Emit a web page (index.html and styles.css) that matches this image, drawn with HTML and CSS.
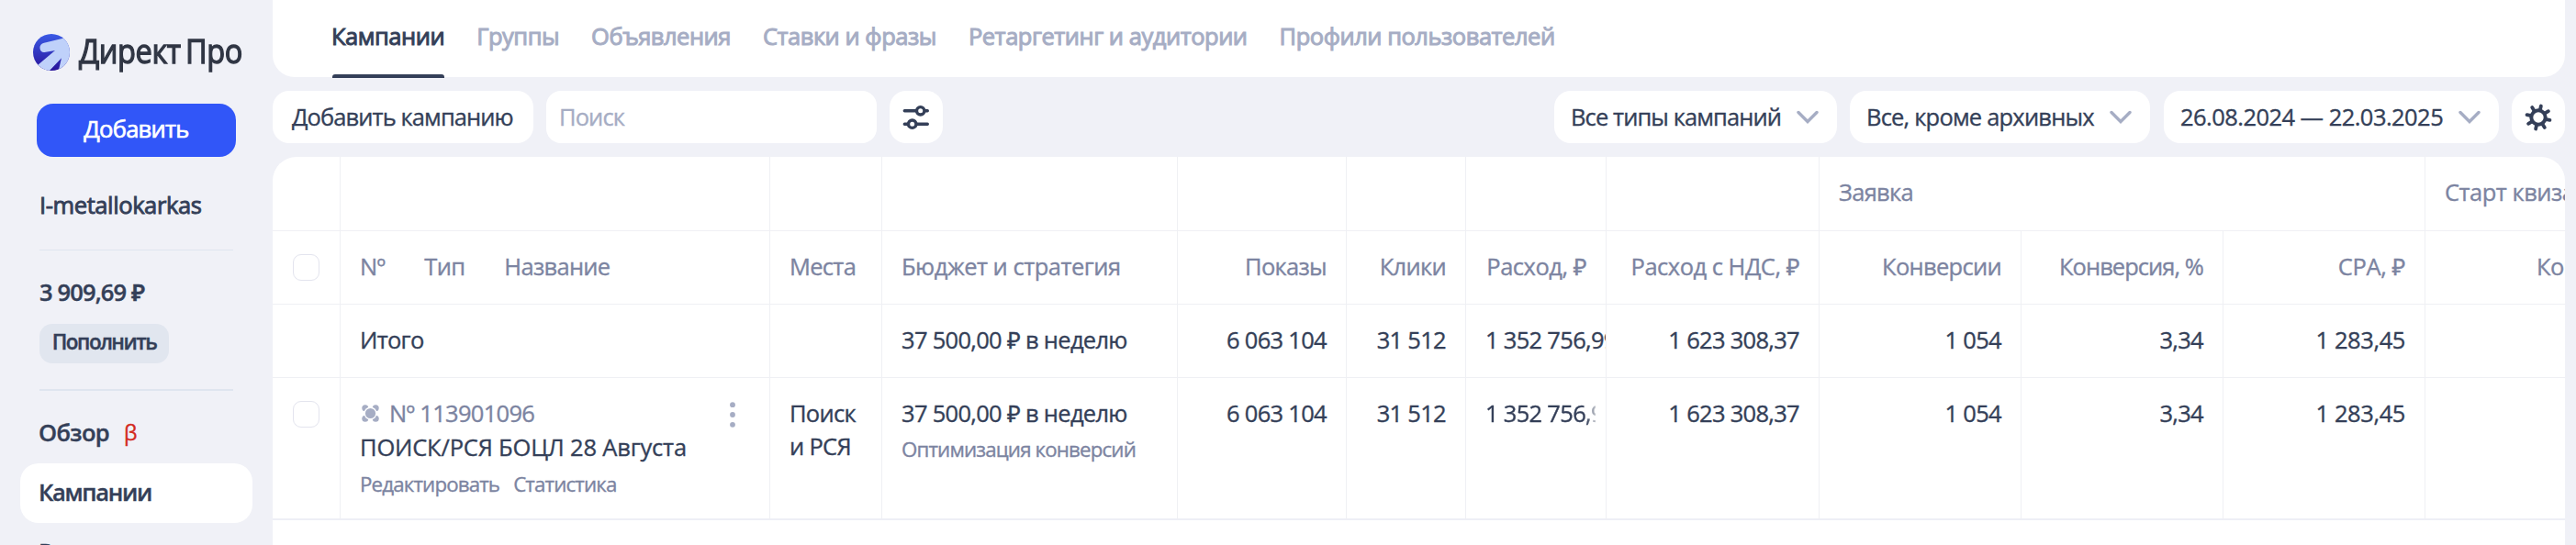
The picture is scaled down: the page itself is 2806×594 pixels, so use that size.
FILE: index.html
```html
<!DOCTYPE html>
<html lang="ru">

<head>
    <meta charset="UTF-8">
    <meta name="viewport" content="width=device-width, initial-scale=1.0">
    <title>Директ Про</title>
    <link rel="stylesheet" href="styles.css">
</head>

<body>
    <div class="layout">
        <aside class="sidebar">
            <div class="logo">
                <svg width="40" height="40" viewBox="0 0 40 40">
                    <defs>
                        <linearGradient id="logoFill" x1="0" y1="0" x2="0" y2="1">
                            <stop offset="0" stop-color="#3a5ae6" />
                            <stop offset="1" stop-color="#29139a" />
                        </linearGradient>
                        <clipPath id="logoClip">
                            <circle cx="20" cy="20" r="20" />
                        </clipPath>
                    </defs>
                    <circle cx="20" cy="20" r="20" fill="url(#logoFill)" />
                    <path clip-path="url(#logoClip)" fill="#bfd1fa" d="M31.7 5 L12 9.8 C8.5 10.8 7.2 13 7.5 15.5 C7.8 18.5 9.5 20.3 12.5 20 L24 18 L5 34 L16 42 L31 26.3 L27.5 41 L42 41 L42 5 Z" />
                </svg>
                <span class="logo-text">Директ Про</span>
            </div>
            <button type="button" class="add-btn">Добавить</button>
            <div class="account">I-metallokarkas</div>
            <div class="divider"></div>
            <div class="balance">3 909,69 ₽</div>
            <button type="button" class="topup">Пополнить</button>
            <div class="divider thick"></div>
            <nav class="menu">
                <a class="menu-item">Обзор <span class="beta">β</span></a>
                <a class="menu-item active">Кампании</a>
                <a class="menu-item">Рекомендации</a>
            </nav>
        </aside>

        <main class="content">
            <nav class="tabs">
                <a class="tab active">Кампании</a>
                <a class="tab">Группы</a>
                <a class="tab">Объявления</a>
                <a class="tab">Ставки и фразы</a>
                <a class="tab">Ретаргетинг и аудитории</a>
                <a class="tab">Профили пользователей</a>
            </nav>

            <div class="toolbar">
                <button type="button" class="box add-campaign">Добавить кампанию</button>
                <div class="box search">Поиск</div>
                <button type="button" class="box icon-btn">
                    <svg width="30" height="28" viewBox="0 0 30 28" fill="none" stroke="#343f58" stroke-width="3.4" stroke-linecap="round">
                        <path d="M2.3 6.8H27.3M2.3 21.2H27.3" />
                        <circle cx="19.7" cy="6.8" r="4.2" fill="#fff" />
                        <circle cx="10.7" cy="21.2" r="4.2" fill="#fff" />
                    </svg>
                </button>
                <div class="spacer"></div>
                <div class="box select types">
                    <span>Все типы кампаний</span>
                    <svg class="chevron" width="24" height="16" viewBox="0 0 24 16"><path d="M2 2.5L12 12.5L22 2.5" /></svg>
                </div>
                <div class="box select status">
                    <span>Все, кроме архивных</span>
                    <svg class="chevron" width="24" height="16" viewBox="0 0 24 16"><path d="M2 2.5L12 12.5L22 2.5" /></svg>
                </div>
                <div class="box select period">
                    <span>26.08.2024 — 22.03.2025</span>
                    <svg class="chevron" width="24" height="16" viewBox="0 0 24 16"><path d="M2 2.5L12 12.5L22 2.5" /></svg>
                </div>
                <button type="button" class="box icon-btn">
                    <svg width="30" height="30" viewBox="-15 -15 30 30" stroke="#343f58" fill="none">
                        <circle r="7.7" stroke-width="4" />
                        <path transform="rotate(13)" stroke-width="3.8" stroke-linecap="round" d="M0 -9V-12.8M0 9V12.8M-9 0H-12.8M9 0H12.8M6.4 -6.4L9.1 -9.1M6.4 6.4L9.1 9.1M-6.4 6.4L-9.1 9.1M-6.4 -6.4L-9.1 -9.1" />
                    </svg>
                </button>
            </div>

            <div class="panel">
                <table>
                    <colgroup>
                        <col class="c-check">
                        <col class="c-name">
                        <col class="c-place">
                        <col class="c-budget">
                        <col class="c-shows">
                        <col class="c-clicks">
                        <col class="c-cost">
                        <col class="c-vat">
                        <col class="c-goal">
                        <col class="c-goal">
                        <col class="c-goal">
                        <col class="c-last">
                    </colgroup>
                    <thead>
                        <tr class="groups">
                            <th></th>
                            <th></th>
                            <th></th>
                            <th></th>
                            <th></th>
                            <th></th>
                            <th></th>
                            <th></th>
                            <th colspan="3">Заявка</th>
                            <th class="wide">Старт квиза</th>
                        </tr>
                        <tr>
                            <th class="check"><span class="checkbox"></span></th>
                            <th>
                                <div class="name-head"><span>Nº</span><span>Тип</span><span>Название</span></div>
                            </th>
                            <th>Места</th>
                            <th class="wide">Бюджет и стратегия</th>
                            <th class="num">Показы</th>
                            <th class="num">Клики</th>
                            <th class="num wide">Расход, ₽</th>
                            <th class="num wide">Расход с НДС, ₽</th>
                            <th class="num">Конверсии</th>
                            <th class="num tight">Конверсия, %</th>
                            <th class="num cpa">CPA, ₽</th>
                            <th class="num">Конверсии</th>
                        </tr>
                    </thead>
                    <tbody>
                        <tr>
                            <td></td>
                            <td>Итого</td>
                            <td></td>
                            <td>37 500,00 ₽ в неделю</td>
                            <td class="num">6 063 104</td>
                            <td class="num">31 512</td>
                            <td class="cut">1 352 756,99</td>
                            <td class="num">1 623 308,37</td>
                            <td class="num">1 054</td>
                            <td class="num">3,34</td>
                            <td class="num cpa">1 283,45</td>
                            <td></td>
                        </tr>
                        <tr class="campaign">
                            <td class="check"><span class="checkbox"></span></td>
                            <td>
                                <div class="camp-top">
                                    <svg width="19" height="19" viewBox="0 0 19 19" fill="#a6adc4">
                                        <circle cx="3.8" cy="3.8" r="3.5" />
                                        <circle cx="15.2" cy="3.8" r="3.5" />
                                        <circle cx="3.8" cy="15.2" r="3.5" />
                                        <circle cx="15.2" cy="15.2" r="3.5" />
                                        <circle cx="9.5" cy="9.5" r="7" fill="#fff" />
                                        <circle cx="9.5" cy="9.5" r="5.6" />
                                    </svg>
                                    <span class="camp-id">Nº 113901096</span>
                                    <svg class="dots" width="6" height="28" viewBox="0 0 6 28" fill="#a6adc4">
                                        <circle cx="3" cy="3.2" r="2.9" />
                                        <circle cx="3" cy="14" r="2.9" />
                                        <circle cx="3" cy="24.8" r="2.9" />
                                    </svg>
                                </div>
                                <div class="camp-name">ПОИСК/РСЯ БОЦЛ 28 Августа</div>
                                <div class="links"><a>Редактировать</a><a>Статистика</a></div>
                            </td>
                            <td>Поиск<br>и РСЯ</td>
                            <td>37 500,00 ₽ в неделю<div class="strategy">Оптимизация конверсий</div></td>
                            <td class="num">6 063 104</td>
                            <td class="num">31 512</td>
                            <td class="cut"><div class="fade">1 352 756,99</div></td>
                            <td class="num">1 623 308,37</td>
                            <td class="num">1 054</td>
                            <td class="num">3,34</td>
                            <td class="num cpa">1 283,45</td>
                            <td></td>
                        </tr>
                    </tbody>
                </table>
            </div>
        </main>
    </div>
</body>

</html>
```
FILE: styles.css
```css
* {
    margin: 0;
    padding: 0;
    box-sizing: border-box;
}

body {
    height: 594px;
    overflow: hidden;
    background: #f0f1f7;
    color: #343f58;
    font-family: "Open Sans", "Noto Sans", sans-serif;
    font-size: 25.5px;
    line-height: 36px;
    letter-spacing: -0.7px;
    -webkit-text-stroke: 0.35px;
}

button {
    border: none;
    color: inherit;
    font: inherit;
    letter-spacing: inherit;
}

.layout {
    display: flex;
    height: 594px;
}

/* sidebar */
.sidebar {
    width: 297px;
    flex-shrink: 0;
    overflow: hidden;
}

.logo {
    display: flex;
    height: 113px;
    padding: 37px 0 0 36px;
    gap: 10px;
}

.logo-text {
    margin-top: -4px;
    color: #303644;
    font-size: 37px;
    line-height: 44px;
    letter-spacing: -0.5px;
    word-spacing: -3px;
    white-space: nowrap;
    transform: scaleX(0.88);
    transform-origin: left;
    -webkit-text-stroke: 1.3px;
}

.add-btn {
    display: block;
    width: 217px;
    height: 58px;
    margin-left: 40px;
    padding-bottom: 4px;
    border-radius: 18px;
    background: #3156f8;
    color: #fff;
    -webkit-text-stroke: 0.7px;
}

.account {
    margin: 34px 0 0 43px;
    letter-spacing: -0.4px;
    -webkit-text-stroke: 0.9px;
}

.divider {
    width: 211px;
    height: 1px;
    margin: 31px 0 0 43px;
    background: #dfe5ef;
}

.divider.thick {
    height: 2px;
    margin-top: 28px;
}

.balance {
    margin: 27px 0 0 43px;
    font-weight: 600;
    letter-spacing: -0.85px;
    -webkit-text-stroke: 0.4px;
}

.topup {
    display: block;
    width: 141px;
    height: 43px;
    margin: 17px 0 0 43px;
    padding: 0 0 3px;
    border-radius: 14px;
    background: #e1e6ef;
    font-size: 22.5px;
    font-weight: 600;
    line-height: 30px;
    letter-spacing: -1.5px;
    -webkit-text-stroke: 0.4px;
}

.menu {
    margin: 14px 0 0 22px;
}

.menu-item {
    display: flex;
    align-items: center;
    width: 253px;
    height: 65px;
    padding: 0 0 3px 20px;
    border-radius: 20px;
    font-weight: 600;
    letter-spacing: -0.65px;
    -webkit-text-stroke: 0.4px;
}

.menu-item.active {
    background: #fff;
    letter-spacing: -1.3px;
}

.beta {
    margin-left: 16px;
    color: #d32a1e;
    font-size: 23px;
    font-weight: 400;
}

/* main area */
.content {
    width: 2497px;
    display: flex;
    flex-direction: column;
}

.tabs {
    display: flex;
    gap: 35px;
    height: 84px;
    flex-shrink: 0;
    padding: 21px 0 0 64px;
    border-radius: 0 0 24px 24px;
    background: #fff;
}

.tab {
    position: relative;
    color: #a6adc4;
    letter-spacing: -0.48px;
    -webkit-text-stroke: 1px;
}

.tab.active {
    color: #343f58;
}

.tab.active::after {
    content: "";
    position: absolute;
    left: 1px;
    right: 0;
    top: 60px;
    height: 4px;
    border-radius: 3px 3px 0 0;
    background: #343f58;
}

.toolbar {
    display: flex;
    gap: 14px;
    margin: 15px 0;
    letter-spacing: -0.9px;
}

.box {
    display: flex;
    align-items: center;
    height: 57px;
    border-radius: 18px;
    background: #fff;
    white-space: nowrap;
}

.add-campaign {
    width: 284px;
    padding: 0 0 2px 21px;
}

.search {
    width: 360px;
    padding: 0 0 2px 14px;
    border-radius: 16px;
    color: #a6adc4;
}

.icon-btn {
    width: 58px;
    justify-content: center;
}

.spacer {
    flex: 1;
}

.select {
    justify-content: space-between;
    padding: 0 20px 2px 18px;
}

.types {
    width: 308px;
}

.status {
    width: 327px;
    margin-right: 1px;
    letter-spacing: -0.8px;
}

.period {
    width: 365px;
    letter-spacing: -0.55px;
}

.chevron {
    margin-top: 3px;
    fill: none;
    stroke: #a6adc4;
    stroke-width: 3.4;
    stroke-linecap: round;
}

/* campaigns table */
.panel {
    flex: 1;
    overflow: hidden;
    border-radius: 26px 26px 0 0;
    background: #fff;
}

table {
    width: 2618px;
    table-layout: fixed;
    border-collapse: separate;
    border-spacing: 0;
}

.c-check { width: 74px; }
.c-name { width: 468px; }
.c-place { width: 122px; }
.c-budget { width: 322px; }
.c-shows { width: 184px; }
.c-clicks { width: 130px; }
.c-cost { width: 153px; }
.c-vat { width: 232px; }
.c-goal { width: 220px; }
.c-last { width: 273px; }

th,
td {
    height: 80px;
    padding: 20px 21px 0 21px;
    border-right: 1px solid #eff0f4;
    border-bottom: 1px solid #eff0f4;
    font-weight: 400;
    text-align: left;
    vertical-align: top;
    white-space: nowrap;
}

th {
    color: #7c84a1;
}

.groups th {
    height: 81px;
}

.num {
    text-align: right;
}

th.wide {
    letter-spacing: -0.5px;
}

th.tight {
    letter-spacing: -0.95px;
}

.cpa {
    letter-spacing: -0.4px;
}

.campaign td {
    height: 155px;
    border-bottom: 2px solid #eeeff6;
}

.check {
    padding: 25px 0 0 22px;
}

.checkbox {
    display: block;
    width: 29px;
    height: 29px;
    border: 1px solid #e3e4ee;
    border-radius: 9px;
}

.name-head {
    display: flex;
    gap: 43px;
}

.camp-top {
    display: flex;
    align-items: center;
    padding-left: 2px;
    color: #7c84a1;
}

.camp-id {
    margin-left: 11px;
}

.dots {
    margin: 4px 16px 0 auto;
}

.camp-name {
    margin-top: 1px;
    letter-spacing: -0.18px;
}

.links {
    display: flex;
    gap: 15px;
    margin-top: 8px;
}

.links,
.strategy {
    color: #7c84a1;
    font-size: 22.3px;
    line-height: 30px;
    letter-spacing: -0.85px;
}

.strategy {
    margin-top: 7px;
}

.cut {
    padding-right: 0;
    overflow: hidden;
}

/* long sums fade out at the cell padding */
.fade {
    width: 120px;
    overflow: hidden;
    -webkit-mask-image: linear-gradient(to right, #000 110px, transparent 124px);
    mask-image: linear-gradient(to right, #000 110px, transparent 124px);
}
```
